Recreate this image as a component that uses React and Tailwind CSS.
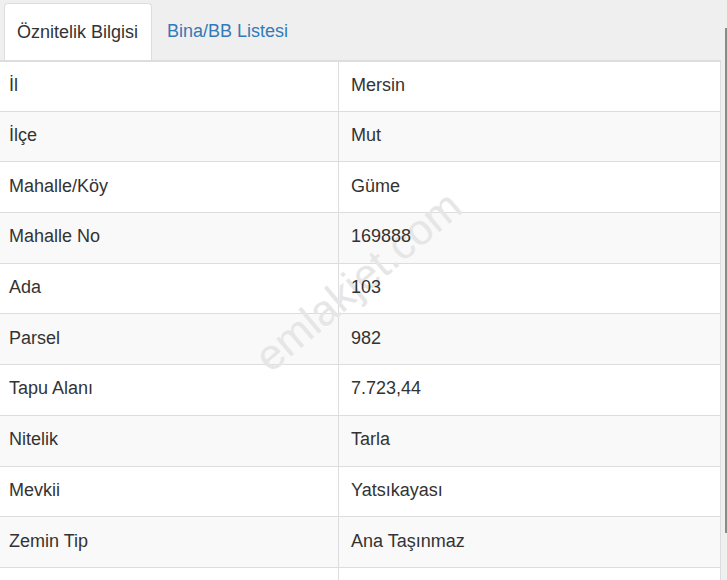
const rows = [
  ['İl', 'Mersin'],
  ['İlçe', 'Mut'],
  ['Mahalle/Köy', 'Güme'],
  ['Mahalle No', '169888'],
  ['Ada', '103'],
  ['Parsel', '982'],
  ['Tapu Alanı', '7.723,44'],
  ['Nitelik', 'Tarla'],
  ['Mevkii', 'Yatsıkayası'],
  ['Zemin Tip', 'Ana Taşınmaz'],
  ['', ''],
]

export default function App() {
  return (
    <div className="relative isolate w-[727px] h-[580px] overflow-hidden bg-[#efefef] font-['Liberation_Sans',Arial,sans-serif] text-[18px] text-[#333]">
      {/* Sekmeler */}
      <div className="flex items-end h-[60px] pl-[4px] w-[721px]">
        <div className="h-[57px] flex items-center pl-[12px] pr-[13px] bg-white border border-b-0 border-[#ddd] rounded-t">
          Öznitelik Bilgisi
        </div>
        <div className="h-[57px] flex items-center px-[15px] text-[#337ab7]">
          Bina/BB Listesi
        </div>
      </div>

      {/* Tablo */}
      <div className="w-[721px] bg-white border-r border-[#ddd]">
        {rows.map(([label, value], i) => (
          <div
            key={i}
            className={`flex h-[50.7px] border-t border-[#ddd] ${i % 2 === 1 ? 'bg-[#f9f9f9]' : 'bg-white'} ${i === 0 ? 'border-t-2' : ''}`}
          >
            <div className="w-[339px] shrink-0 flex items-center pl-[9px] pb-[2px] border-r border-[#ddd]">
              <span className="relative z-10">{label}</span>
            </div>
            <div className="flex-1 flex items-center pl-[12px] pb-[2px]">
              <span className="relative z-10">{value}</span>
            </div>
          </div>
        ))}
      </div>

      {/* Filigran */}
      <div
        aria-hidden="true"
        className="absolute z-[5] left-[358px] top-[281px] -translate-x-1/2 -translate-y-1/2 -rotate-[40deg] text-[43px] text-[#e6e6e6] whitespace-nowrap pointer-events-none select-none"
      >
        emlakjet.com
      </div>

      {/* Kaydırma çubuğu */}
      <div className="absolute left-[725px] top-[28px] w-[2px] h-[505px] bg-[#8a8a8a]" />
    </div>
  )
}
